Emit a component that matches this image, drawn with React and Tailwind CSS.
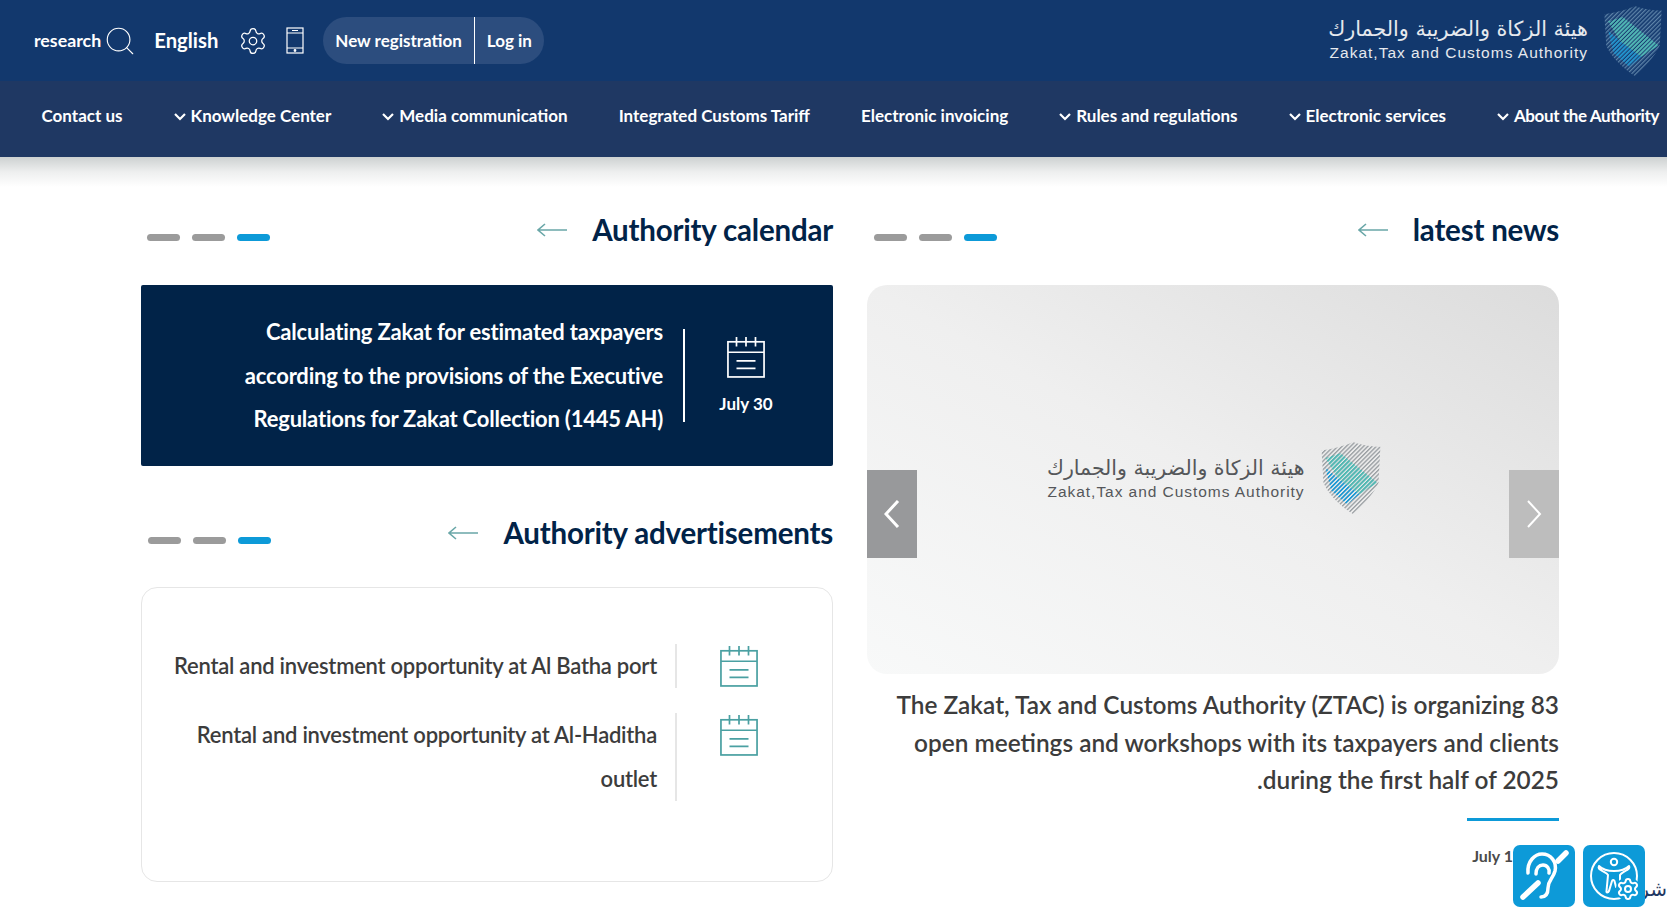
import { Search, Settings } from 'lucide-react'

const NAV = [
  { label: 'About the Authority', sub: true, tight: true },
  { label: 'Electronic services', sub: true },
  { label: 'Rules and regulations', sub: true },
  { label: 'Electronic invoicing' },
  { label: 'Integrated Customs Tariff' },
  { label: 'Media communication', sub: true },
  { label: 'Knowledge Center', sub: true },
  { label: 'Contact us' },
]

function Shield({ id, outer, className }) {
  return (
    <svg viewBox="0 0 64 78" className={className}>
      <defs>
        <pattern id={`${id}-a`} width="3.2" height="3.2" patternUnits="userSpaceOnUse" patternTransform="rotate(-45)">
          <rect width="3.2" height="1.4" fill={outer} />
        </pattern>
        <pattern id={`${id}-b`} width="3.2" height="3.2" patternUnits="userSpaceOnUse" patternTransform="rotate(-45)">
          <rect width="3.2" height="2" fill="#4fb9b4" />
        </pattern>
        <pattern id={`${id}-c`} width="3.2" height="3.2" patternUnits="userSpaceOnUse" patternTransform="rotate(-45)">
          <rect width="3.2" height="1.7" fill="#1b9ad6" />
        </pattern>
      </defs>
      <path d="M1 10 C14 8 26 5 34 1 C42 4 54 6 63 6 L61 44 C56 56 44 68 34 77 C20 68 8 56 3 44 Z" fill={`url(#${id}-a)`} />
      <path d="M5 28 L18 39 L41 56 L28 67 L11 52 Z" fill={`url(#${id}-c)`} />
      <path d="M5 18 L21 13 L60 44 L41 56 L18 39 Z" fill={`url(#${id}-b)`} />
    </svg>
  )
}

function CalendarIcon({ color, className }) {
  return (
    <svg viewBox="0 0 40 44" fill="none" stroke={color} strokeWidth="1.8" className={className}>
      <rect x="1" y="6" width="38" height="37" />
      <path d="M1 17 H39 M10 1 V11 M20 1 V11 M30 1 V11 M10 26 H30 M10 34 H30" />
    </svg>
  )
}

function ThinArrow() {
  return (
    <svg viewBox="0 0 30 14" fill="none" stroke="#6aa7a8" strokeWidth="1.6" className="w-[30px] h-[14px] shrink-0">
      <path d="M30 7 H1 M8 1 L1 7 L8 13" />
    </svg>
  )
}

function Dots({ className }) {
  return (
    <div className={`flex gap-[12px] mr-auto mt-[15px] ${className}`}>
      <span className="w-[33px] h-[7px] rounded-full bg-[#0d9ad8]" />
      <span className="w-[33px] h-[7px] rounded-full bg-[#9b9b9b]" />
      <span className="w-[33px] h-[7px] rounded-full bg-[#9b9b9b]" />
    </div>
  )
}

function SectionHead({ title, dots, className }) {
  return (
    <div className={`flex items-center h-[40px] gap-[25px] ${className}`}>
      <h2 className="text-[29.5px] font-bold text-[#012348] tracking-[-0.2px] whitespace-nowrap">{title}</h2>
      <ThinArrow />
      <Dots className={dots} />
    </div>
  )
}

export default function App() {
  return (
    <div dir="rtl" className="relative h-[916px] overflow-hidden bg-white font-['Lato','Liberation_Sans',sans-serif]">
      <header className="flex items-center justify-between h-[81px] bg-[#12386d] text-white">
        <div className="flex items-center gap-[15px] mr-[4px]">
          <Shield id="top" outer="#5d83a8" className="w-[60px] h-[72px]" />
          <div className="flex flex-col items-start w-[261px] -mt-[4px]">
            <span className="font-['DejaVu_Sans',sans-serif] text-[20.7px] leading-[28px] text-[#e6e9ee] whitespace-nowrap">هيئة الزكاة والضريبة والجمارك</span>
            <span dir="ltr" className="font-['Liberation_Sans',sans-serif] text-[15.5px] leading-[20px] tracking-[1px] text-[#e6e9ee] whitespace-nowrap">Zakat,Tax and Customs Authority</span>
          </div>
        </div>
        <div dir="ltr" className="flex items-center gap-[21px] ml-[34px]">
          <div className="flex items-center gap-[6px]">
            <span className="text-[17.8px] font-bold">research</span>
            <Search size={34} strokeWidth={0.8} className="-m-[4px]" />
          </div>
          <span className="text-[20.3px] font-bold">English</span>
          <Settings size={30} strokeWidth={1} className="-ml-[1px] -mr-[3px]" />
          <svg viewBox="0 0 18 27" fill="none" stroke="#fff" strokeWidth="1.2" className="w-[18px] h-[27px] -mr-[2px]">
            <rect x="1" y="1" width="16" height="25" />
            <path d="M1 6 H17 M1 21 H17 M6 3.5 H12" />
            <circle cx="9" cy="23.5" r="0.8" fill="#fff" />
          </svg>
          <div className="flex items-center h-[47px] rounded-full bg-[#2c4d7e] font-bold text-[17px]">
            <span className="px-[12px]">New registration</span>
            <span className="w-[1px] h-[47px] bg-white" />
            <span className="px-[12px]">Log in</span>
          </div>
        </div>
      </header>
      <nav className="flex items-center gap-[51px] h-[76px] pr-[8px] pb-[6px] bg-[#1f3863] text-white text-[17px] font-bold">
        {NAV.map((n) => (
          <a key={n.label} className={`flex items-center gap-[5px] whitespace-nowrap ${n.tight ? 'tracking-[-0.4px]' : ''}`}>
            {n.label}
            {n.sub && (
              <svg viewBox="0 0 12 8" fill="none" stroke="#fff" strokeWidth="2.2" className="w-[12px] h-[8px] mt-[2px]">
                <path d="M1 1 L6 6 L11 1" />
              </svg>
            )}
          </a>
        ))}
      </nav>
      <div className="h-[30px] bg-linear-to-b from-[#cdd1d1] via-[#eeefef] to-white" />
      <main className="grid grid-cols-2 gap-[34px] pl-[141px] pr-[108px] pt-[23px]">
        <section>
          <SectionHead title="latest news" dots="ml-[7px]" className="mb-[35px]" />
          <div className="relative flex items-center justify-center h-[389px] rounded-[20px] bg-linear-to-tr from-[#f8f9f9] via-[#efefef] to-[#dcdcdc]">
            <div className="flex items-center gap-[15px] -mt-[4px] mr-[-2px]">
              <Shield id="news" outer="#9a9fa3" className="w-[62px] h-[74px]" />
              <div className="flex flex-col items-start w-[258px] text-[#55575a]">
                <span className="font-['DejaVu_Sans',sans-serif] text-[20.5px] leading-[28px] whitespace-nowrap">هيئة الزكاة والضريبة والجمارك</span>
                <span dir="ltr" className="font-['Liberation_Sans',sans-serif] text-[15.5px] leading-[20px] tracking-[0.95px] whitespace-nowrap">Zakat,Tax and Customs Authority</span>
              </div>
            </div>
            <button className="absolute right-0 top-[185px] flex items-center justify-center w-[50px] h-[88px] bg-[#bdbdbd]">
              <svg viewBox="0 0 16 28" fill="none" stroke="#fff" strokeWidth="2" className="w-[16px] h-[28px]">
                <path d="M2 1 L14 14 L2 27" />
              </svg>
            </button>
            <button className="absolute left-0 top-[185px] flex items-center justify-center w-[50px] h-[88px] bg-[#98999b]">
              <svg viewBox="0 0 16 28" fill="none" stroke="#fff" strokeWidth="3" className="w-[16px] h-[28px]">
                <path d="M14 1 L2 14 L14 27" />
              </svg>
            </button>
          </div>
          <p className="mt-[12px] text-[24.4px] leading-[37.5px] font-semibold text-[#3c3c3c]">
            The Zakat, Tax and Customs Authority (ZTAC) is organizing 83<br />
            open meetings and workshops with its taxpayers and clients<br />
            during the first half of 2025.
          </p>
          <div className="w-[92px] h-[3px] bg-[#0d9ad8] mt-[19px]" />
          <p className="mt-[23px] pr-[46px] text-[16px] font-bold text-[#4b4b4b]">July 1</p>
        </section>

        <section>
          <SectionHead title="Authority calendar" dots="ml-[6px]" className="mb-[35px]" />
          <div className="flex items-center h-[181px] rounded-[2px] bg-[#012348] text-white">
            <div className="flex flex-col items-center w-[148px] pr-[26px] gap-[12px]">
              <CalendarIcon color="#ffffff" className="w-[38px] h-[44px]" />
              <span className="text-[17px] font-bold whitespace-nowrap">July 30</span>
            </div>
            <div className="w-[2px] h-[93px] bg-white" />
            <p className="mr-[20px] text-[22px] leading-[43.5px] font-bold tracking-[-0.2px]">
              Calculating Zakat for estimated taxpayers<br />
              according to the provisions of the Executive<br />
              Regulations for Zakat Collection (1445 AH)
            </p>
          </div>
          <SectionHead title="Authority advertisements" dots="ml-[7px]" className="mt-[47px] mb-[34px]" />
          <div className="h-[295px] pt-[56px] rounded-[16px] border border-[#e6e6e6] text-[22px] leading-[43.5px] font-semibold text-[#3c3c3c] tracking-[-0.25px]">
            <div className="flex items-start h-[44px]">
              <div className="flex justify-center w-[155px] pr-[32px]">
                <CalendarIcon color="#4aa0a2" className="w-[38px] h-[44px]" />
              </div>
              <div className="w-[2px] h-[44px] bg-[#e6e6e6]" />
              <p className="mr-[18px] whitespace-nowrap">Rental and investment opportunity at Al Batha port</p>
            </div>
            <div className="flex items-start mt-[25px]">
              <div className="flex justify-center w-[155px] pr-[32px]">
                <CalendarIcon color="#4aa0a2" className="w-[38px] h-[44px]" />
              </div>
              <div className="w-[2px] h-[88px] bg-[#e6e6e6]" />
              <p className="mr-[18px]">Rental and investment opportunity at Al-Haditha<br />outlet</p>
            </div>
          </div>
        </section>
      </main>

      <span className="absolute right-0 top-[874px] font-['DejaVu_Sans',sans-serif] text-[20px] text-[#1f3863]">شر</span>
      <div dir="ltr" className="absolute left-[1513px] top-[845px] flex gap-[8px]">
        <button className="w-[62px] h-[62px] rounded-[7px] bg-[#0d9ad8]">
          <svg viewBox="0 0 62 62" fill="none" stroke="#fff" strokeLinecap="round" className="w-[62px] h-[62px]">
            <path d="M53 8 L45 16 M25 38 L10 52" strokeWidth="5.5" />
            <path d="M15 28 C14 16 22 9 29 9 C38 9 44 17 42 26 C40 34 35 35 35 43 C35 50 32 52 28 52" strokeWidth="3.5" />
            <path d="M23 29 C23 23 26 20 30 20 C34 20 37 24 36 28" strokeWidth="3.5" />
          </svg>
        </button>
        <button className="relative w-[62px] h-[62px] rounded-[7px] bg-[#0d9ad8]">
          <svg viewBox="0 0 62 62" fill="none" stroke="#fff" strokeLinecap="round" strokeLinejoin="round" strokeWidth="2" className="w-[62px] h-[62px]">
            <circle cx="31" cy="31" r="23" />
            <circle cx="31" cy="17" r="3.2" />
            <path d="M16 21 C20 25 26 26 31 26 C36 26 42 25 46 21 C47 23 46 24 44 25 C41 27 38 28 37 30 L37 40 M25 30 C24 28 20 27 18 25 C16 24 15 23 16 21 M25 30 L23.5 46 C23 48 25 48 26 46 L29 36 C29.5 34.5 31 35 31.5 36 L33 42" />
          </svg>
          <span className="absolute right-[5px] bottom-[6px] flex items-center justify-center w-[24px] h-[24px] rounded-full bg-[#0d9ad8]">
            <Settings size={24} strokeWidth={2} className="text-white" />
          </span>
        </button>
      </div>
    </div>
  )
}
